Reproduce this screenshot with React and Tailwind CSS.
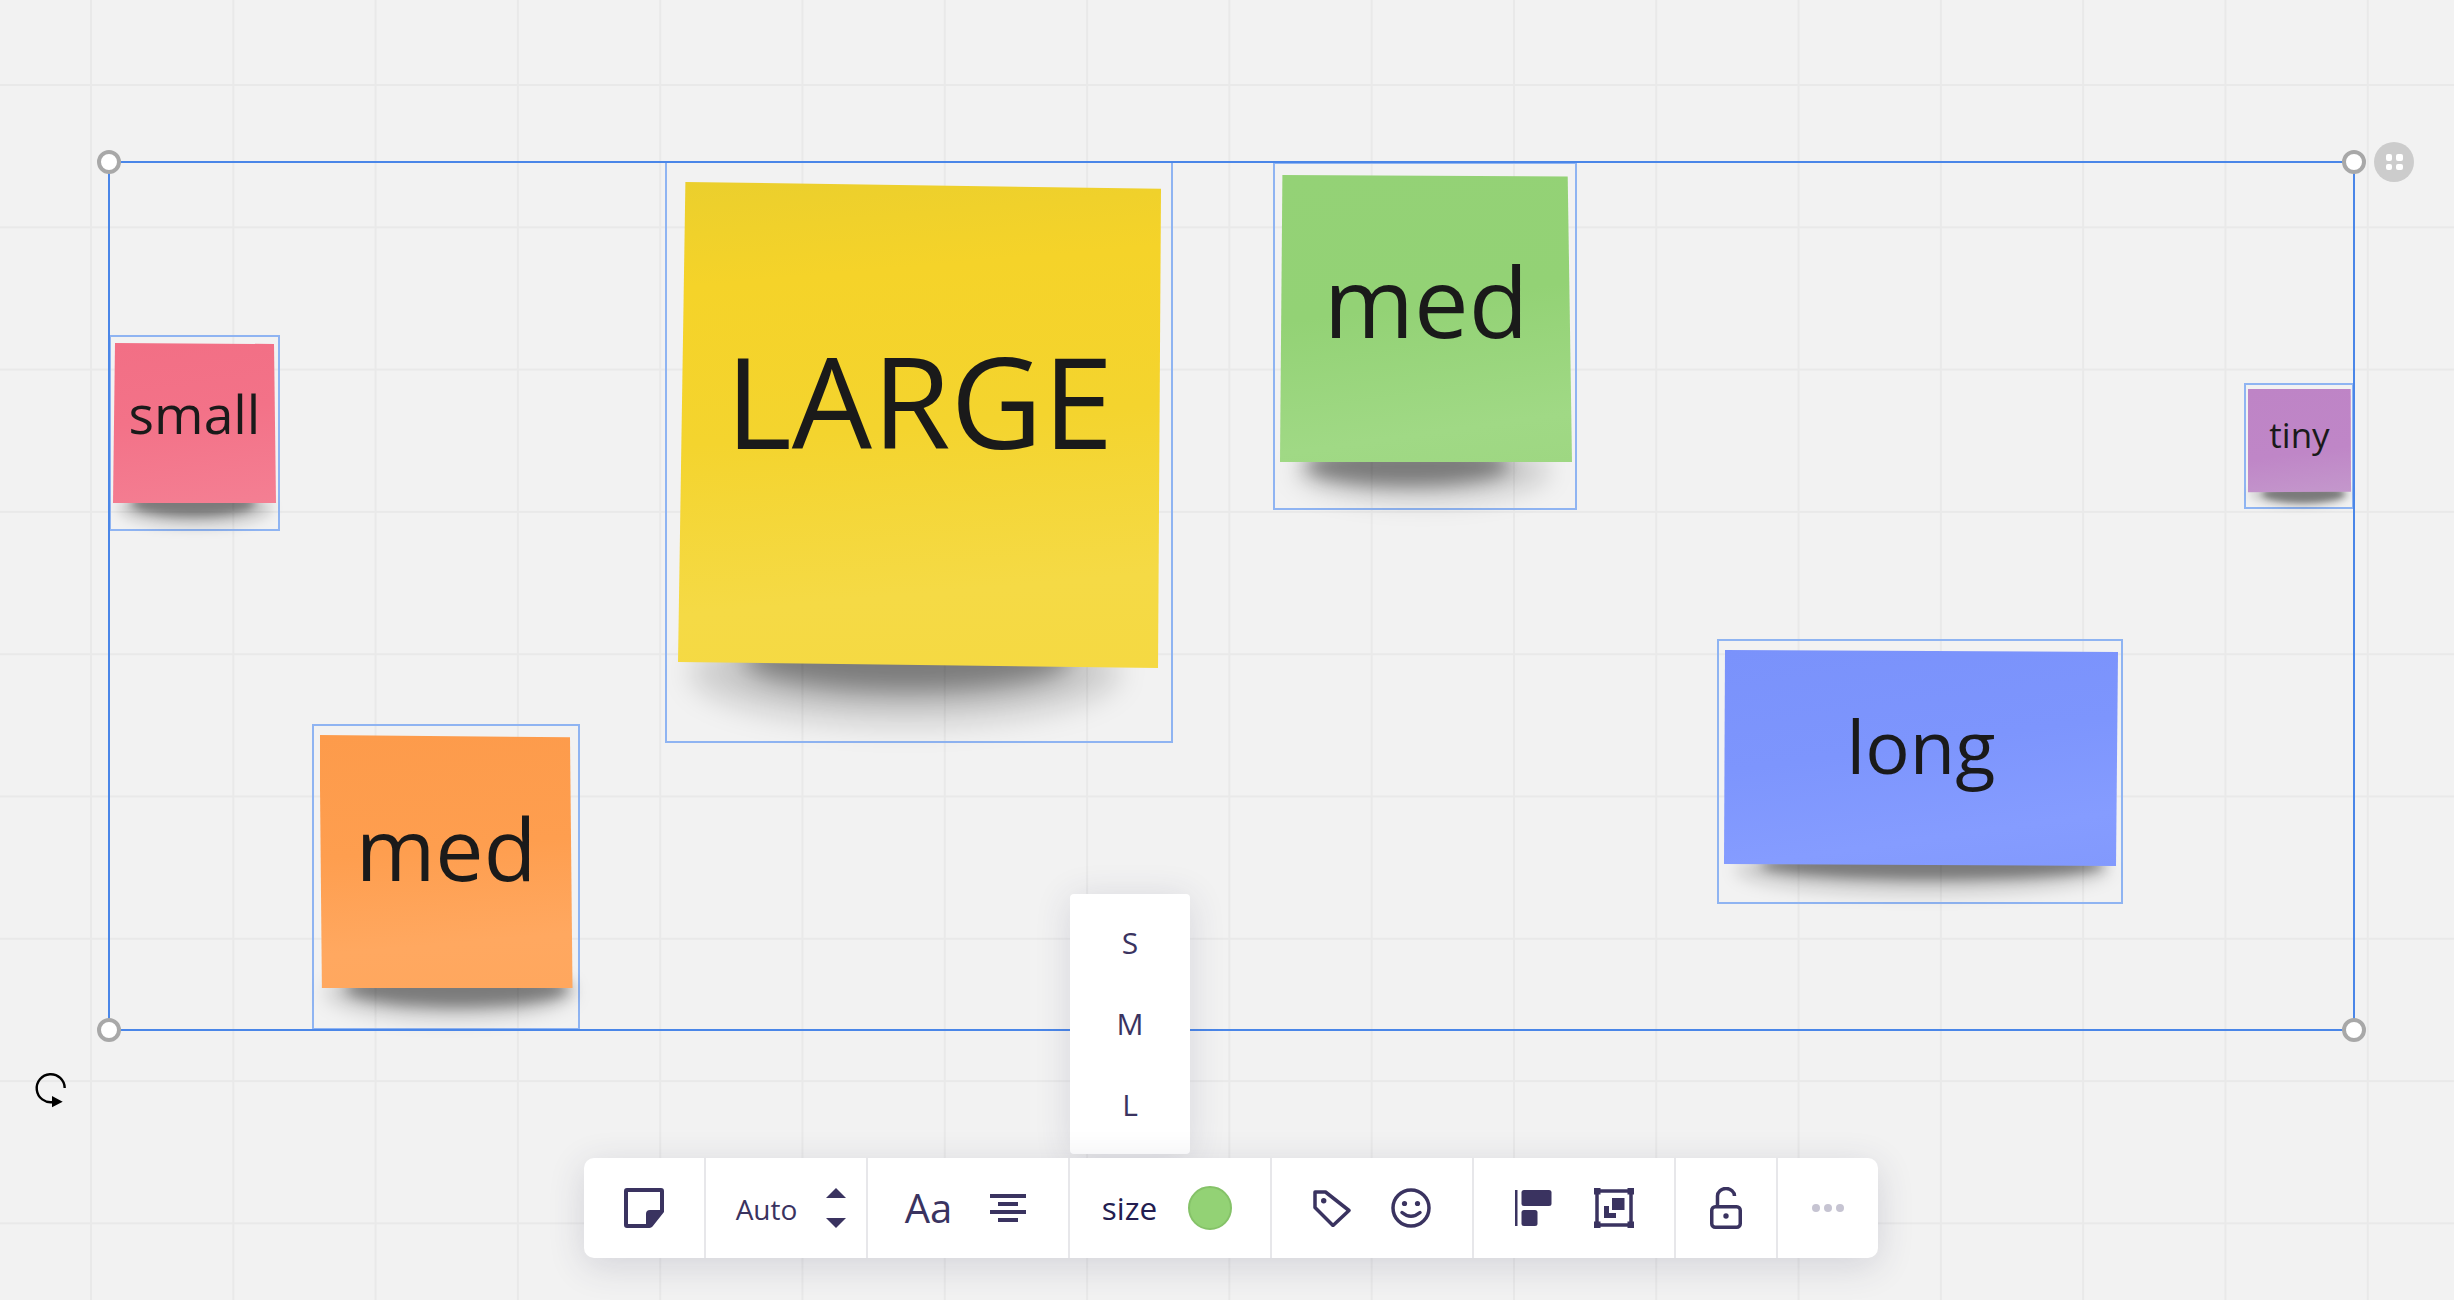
import React from "react";

const notes = [
  {
    label: "small",
    frame: "left-[109px] top-[335px] w-[171px] h-[196px]",
    sheet:
      "ml-[2px] mt-[6px] w-[163px] h-[160px] pb-[19px] text-[53.5px] bg-[linear-gradient(172deg,#f26f85_0%,#f37288_45%,#f47f93_100%)] [clip-path:polygon(2px_0,161px_1px,163px_160px,0_160px)]",
    wide: "left-[7px] top-[151px] w-[154px] h-[40px] blur-[6px]",
    dark: "left-[20px] top-[153px] w-[125px] h-[27px] blur-[5px]",
  },
  {
    label: "LARGE",
    frame: "left-[665px] top-[161px] w-[508px] h-[582px]",
    sheet:
      "ml-[11px] mt-[19px] w-[483px] h-[486px] pb-[52px] text-[127px] bg-[linear-gradient(175deg,#ebcf2d_0%,#f5d329_20%,#f4d42e_50%,#f5da45_82%,#f5d942_100%)] [clip-path:polygon(7.4px_0,483px_6.7px,480px_486px,0_480px)]",
    wide: "left-[23px] top-[457px] w-[430px] h-[105px] blur-[14px]",
    dark: "left-[75px] top-[462px] w-[330px] h-[68px] blur-[13px]",
  },
  {
    label: "med",
    frame: "left-[1273px] top-[162px] w-[304px] h-[348px]",
    sheet:
      "ml-[5px] mt-[11px] w-[292px] h-[287px] pb-[35px] text-[97.5px] bg-[linear-gradient(172deg,#94d276_0%,#93d275_45%,#a0d985_85%,#9ed782_100%)] [clip-path:polygon(2.4px_0,287.7px_1.4px,292px_287px,0_287px)]",
    wide: "left-[20px] top-[276px] w-[255px] h-[62px] blur-[12px]",
    dark: "left-[30px] top-[281px] w-[205px] h-[41px] blur-[9px]",
  },
  {
    label: "long",
    frame: "left-[1717px] top-[639px] w-[406px] h-[265px]",
    sheet:
      "ml-[5px] mt-[9px] w-[394px] h-[216px] pb-[24px] text-[74px] bg-[linear-gradient(172deg,#7a92fb_0%,#7d95fd_45%,#859cff_80%,#8299fd_100%)] [clip-path:polygon(1px_0,394px_2px,392px_216px,0_214px)]",
    wide: "left-[16px] top-[204px] w-[375px] h-[50px] blur-[8px]",
    dark: "left-[41px] top-[209px] w-[345px] h-[30px] blur-[6px]",
  },
  {
    label: "med",
    frame: "left-[312px] top-[724px] w-[268px] h-[306px]",
    sheet:
      "ml-[5.5px] mt-[9px] w-[253px] h-[253px] pb-[27px] text-[86px] bg-[linear-gradient(175deg,#fd9b4b_0%,#fe9e4f_45%,#ffa860_80%,#ffa75e_100%)] [clip-path:polygon(0_0,250.5px_2.3px,253px_253px,2.4px_253px)]",
    wide: "left-[11px] top-[239px] w-[250px] h-[55px] blur-[9px]",
    dark: "left-[31px] top-[244px] w-[225px] h-[37px] blur-[7px]",
  },
  {
    label: "tiny",
    frame: "left-[2244px] top-[383px] w-[110px] h-[126px]",
    sheet:
      "ml-[2px] mt-[3.7px] w-[103px] h-[104px] pb-[13px] text-[35px] bg-[linear-gradient(172deg,#be84c6_0%,#bf86c7_60%,#c498cc_100%)] [clip-path:polygon(0_0,102.7px_0,103px_103px,0_103.6px)]",
    wide: "left-[4px] top-[97px] w-[100px] h-[24px] blur-[4px]",
    dark: "left-[16px] top-[100px] w-[83px] h-[18px] blur-[3px]",
  },
];

const handles = [
  "left-[97px] top-[150px]",
  "left-[2342px] top-[150px]",
  "left-[97px] top-[1018px]",
  "left-[2342px] top-[1018px]",
];

const StickyNote = ({ note }) => (
  <div className={`absolute border-2 border-[#8fb4f2] ${note.frame}`}>
    <div className={`absolute rounded-[50%] bg-black/15 ${note.wide}`} />
    <div className={`absolute rounded-[50%] bg-black/40 ${note.dark}`} />
    <div
      className={`relative flex items-center justify-center leading-none text-[#1a1a1a] ${note.sheet}`}
    >
      {note.label}
    </div>
  </div>
);

const RotateCursor = () => (
  <svg className="absolute left-[20px] top-[1060px]" width="70" height="70" viewBox="0 0 70 70">
    <path d="M44.7 28A14 14 0 1 0 33 42" fill="none" stroke="#000" strokeWidth="2.4" />
    <path d="M32 36l10.7 5.700L32 47.300z" fill="#000" />
  </svg>
);

const StickerIcon = () => (
  <svg width="40" height="40" viewBox="0 0 40 40" fill="#3a3360">
    <path
      fillRule="evenodd"
      d="M3 0h34a3 3 0 0 1 3 3v21L28.500 38.500a4 4 0 0 1-3 1.500H3a3 3 0 0 1-3-3V3a3 3 0 0 1 3-3zM4 4v32h18V26a4 4 0 0 1 4-4h10V4z"
    />
  </svg>
);

const SortArrows = () => (
  <svg width="20" height="40" viewBox="0 0 20 40" fill="#3a3360">
    <path d="M10 0l10 10H0z" />
    <path d="M0 30h20L10 40z" />
  </svg>
);

const AlignIcon = () => (
  <svg width="36" height="28" viewBox="0 0 36 28" fill="#3a3360">
    <rect x="0" y="0" width="36" height="4" />
    <rect x="8" y="8" width="20" height="4" />
    <rect x="0" y="16" width="36" height="4" />
    <rect x="8" y="24" width="20" height="4" />
  </svg>
);

const TagIcon = () => (
  <svg width="38" height="37" viewBox="0 0 38 37" fill="none" stroke="#3a3360" strokeWidth="3.500" strokeLinejoin="round">
    <path d="M2 2h10.500L36 20.500 20 35.500 2 17.500z" />
    <circle cx="10.700" cy="10.700" r="2.700" fill="#3a3360" stroke="none" />
  </svg>
);

const SmileIcon = () => (
  <svg width="40" height="40" viewBox="0 0 40 40" fill="none" stroke="#3a3360" strokeWidth="3.500" strokeLinecap="round">
    <circle cx="20" cy="20" r="18" />
    <circle cx="13.500" cy="15.500" r="2.600" fill="#3a3360" stroke="none" />
    <circle cx="26.500" cy="15.500" r="2.600" fill="#3a3360" stroke="none" />
    <path d="M11 24.500q9 7.500 18 0" />
  </svg>
);

const AlignBlocksIcon = () => (
  <svg width="37" height="36" viewBox="0 0 37 36" fill="#3a3360">
    <rect x="0" y="0" width="2.500" height="36" />
    <rect x="6.500" y="0" width="30" height="16" rx="2.500" />
    <rect x="6.500" y="20" width="16" height="16" rx="2.500" />
  </svg>
);

const GroupIcon = () => (
  <svg width="40" height="40" viewBox="0 0 40 40" fill="#3a3360">
    <rect x="3" y="3" width="34" height="34" fill="none" stroke="#3a3360" strokeWidth="3.500" />
    <rect x="0" y="0" width="6.500" height="6.500" />
    <rect x="33.500" y="0" width="6.500" height="6.500" />
    <rect x="0" y="33.500" width="6.500" height="6.500" />
    <rect x="33.500" y="33.500" width="6.500" height="6.500" />
    <rect x="18" y="10" width="12.500" height="12" />
    <path d="M10 18h5v7h7v5H10z" />
  </svg>
);

const LockIcon = () => (
  <svg width="32" height="42" viewBox="0 0 32 42" fill="none" stroke="#3a3360" strokeWidth="3.500">
    <rect x="1.750" y="19.750" width="28.500" height="20.500" rx="3.500" />
    <path d="M7.500 19V9a8.500 7.500 0 0 1 17 0" />
    <circle cx="16" cy="29" r="2.700" fill="#3a3360" stroke="none" />
  </svg>
);

const MoreDots = () => (
  <svg width="32" height="8" viewBox="0 0 32 8" fill="#c6c4d2">
    <circle cx="4" cy="4" r="4" />
    <circle cx="16" cy="4" r="4" />
    <circle cx="28" cy="4" r="4" />
  </svg>
);

const Section = ({ className, children }) => (
  <div className={`flex items-center justify-center h-full border-r-2 border-[#e7e7ea] ${className}`}>
    {children}
  </div>
);

const Toolbar = () => (
  <div className="absolute left-[584px] top-[1158px] flex w-[1294px] h-[100px] rounded-[10px] bg-white text-[#3a3360] shadow-[0_8px_36px_rgba(50,50,90,0.16)]">
    <Section className="w-[122px]">
      <StickerIcon />
    </Section>
    <Section className="w-[162px] gap-[29px] pl-[10px]">
      <span className="text-[28px] leading-none mt-[2px]">Auto</span>
      <SortArrows />
    </Section>
    <Section className="w-[202px] gap-[38px] pr-[5px]">
      <span className="text-[40px] leading-none">Aa</span>
      <AlignIcon />
    </Section>
    <Section className="w-[202px] gap-[31px] pr-[6px]">
      <span className="text-[31.5px] leading-none text-[#231d50]">size</span>
      <div className="w-[44px] h-[44px] rounded-full bg-[#93d275] border-2 border-[#85c268]" />
    </Section>
    <Section className="w-[202px] gap-[40px]">
      <TagIcon />
      <SmileIcon />
    </Section>
    <Section className="w-[202px] gap-[42px]">
      <AlignBlocksIcon />
      <GroupIcon />
    </Section>
    <Section className="w-[102px]">
      <LockIcon />
    </Section>
    <div className="flex flex-1 items-center justify-center">
      <MoreDots />
    </div>
  </div>
);

const SizeMenu = () => (
  <div className="absolute left-[1070px] top-[894px] flex flex-col w-[120px] h-[260px] py-[8.5px] rounded-[4px] bg-white text-[30px] text-[#3a3360] shadow-[0_4px_36px_rgba(50,50,90,0.14)]">
    {["S", "M", "L"].map((size) => (
      <div key={size} className="flex items-center justify-center h-[81px] leading-none">
        {size}
      </div>
    ))}
  </div>
);

const App = () => {
  return (
    <div className="relative w-full h-[1300px] overflow-hidden font-['Open_Sans',sans-serif] bg-[#f2f2f2] bg-[linear-gradient(to_right,#e9e9e9_2px,transparent_2px),linear-gradient(to_bottom,#e9e9e9_2px,transparent_2px)] bg-[size:142.3px_142.3px] bg-[position:90px_84px]">
      {notes.map((note) => (
        <StickyNote key={note.frame} note={note} />
      ))}

      <div className="absolute left-[108px] top-[161px] w-[2247px] h-[870px] border-2 border-[#4a86e8]" />
      {handles.map((place) => (
        <div
          key={place}
          className={`absolute w-[24px] h-[24px] rounded-full bg-white border-[4px] border-[#a8a8a8] ${place}`}
        />
      ))}
      <div className="absolute left-[2374px] top-[142px] flex items-center justify-center w-[40px] h-[40px] rounded-full bg-[#cccccc]">
        <div className="grid grid-cols-2 gap-x-[4px] gap-y-[3px]">
          <span className="w-[6.500px] h-[6.500px] rounded-[2px] bg-white" />
          <span className="w-[6.500px] h-[6.500px] rounded-[2px] bg-white" />
          <span className="w-[6.500px] h-[6.500px] rounded-[2px] bg-white" />
          <span className="w-[6.500px] h-[6.500px] rounded-[2px] bg-white" />
        </div>
      </div>

      <RotateCursor />
      <SizeMenu />
      <Toolbar />
    </div>
  );
};

export default App;
